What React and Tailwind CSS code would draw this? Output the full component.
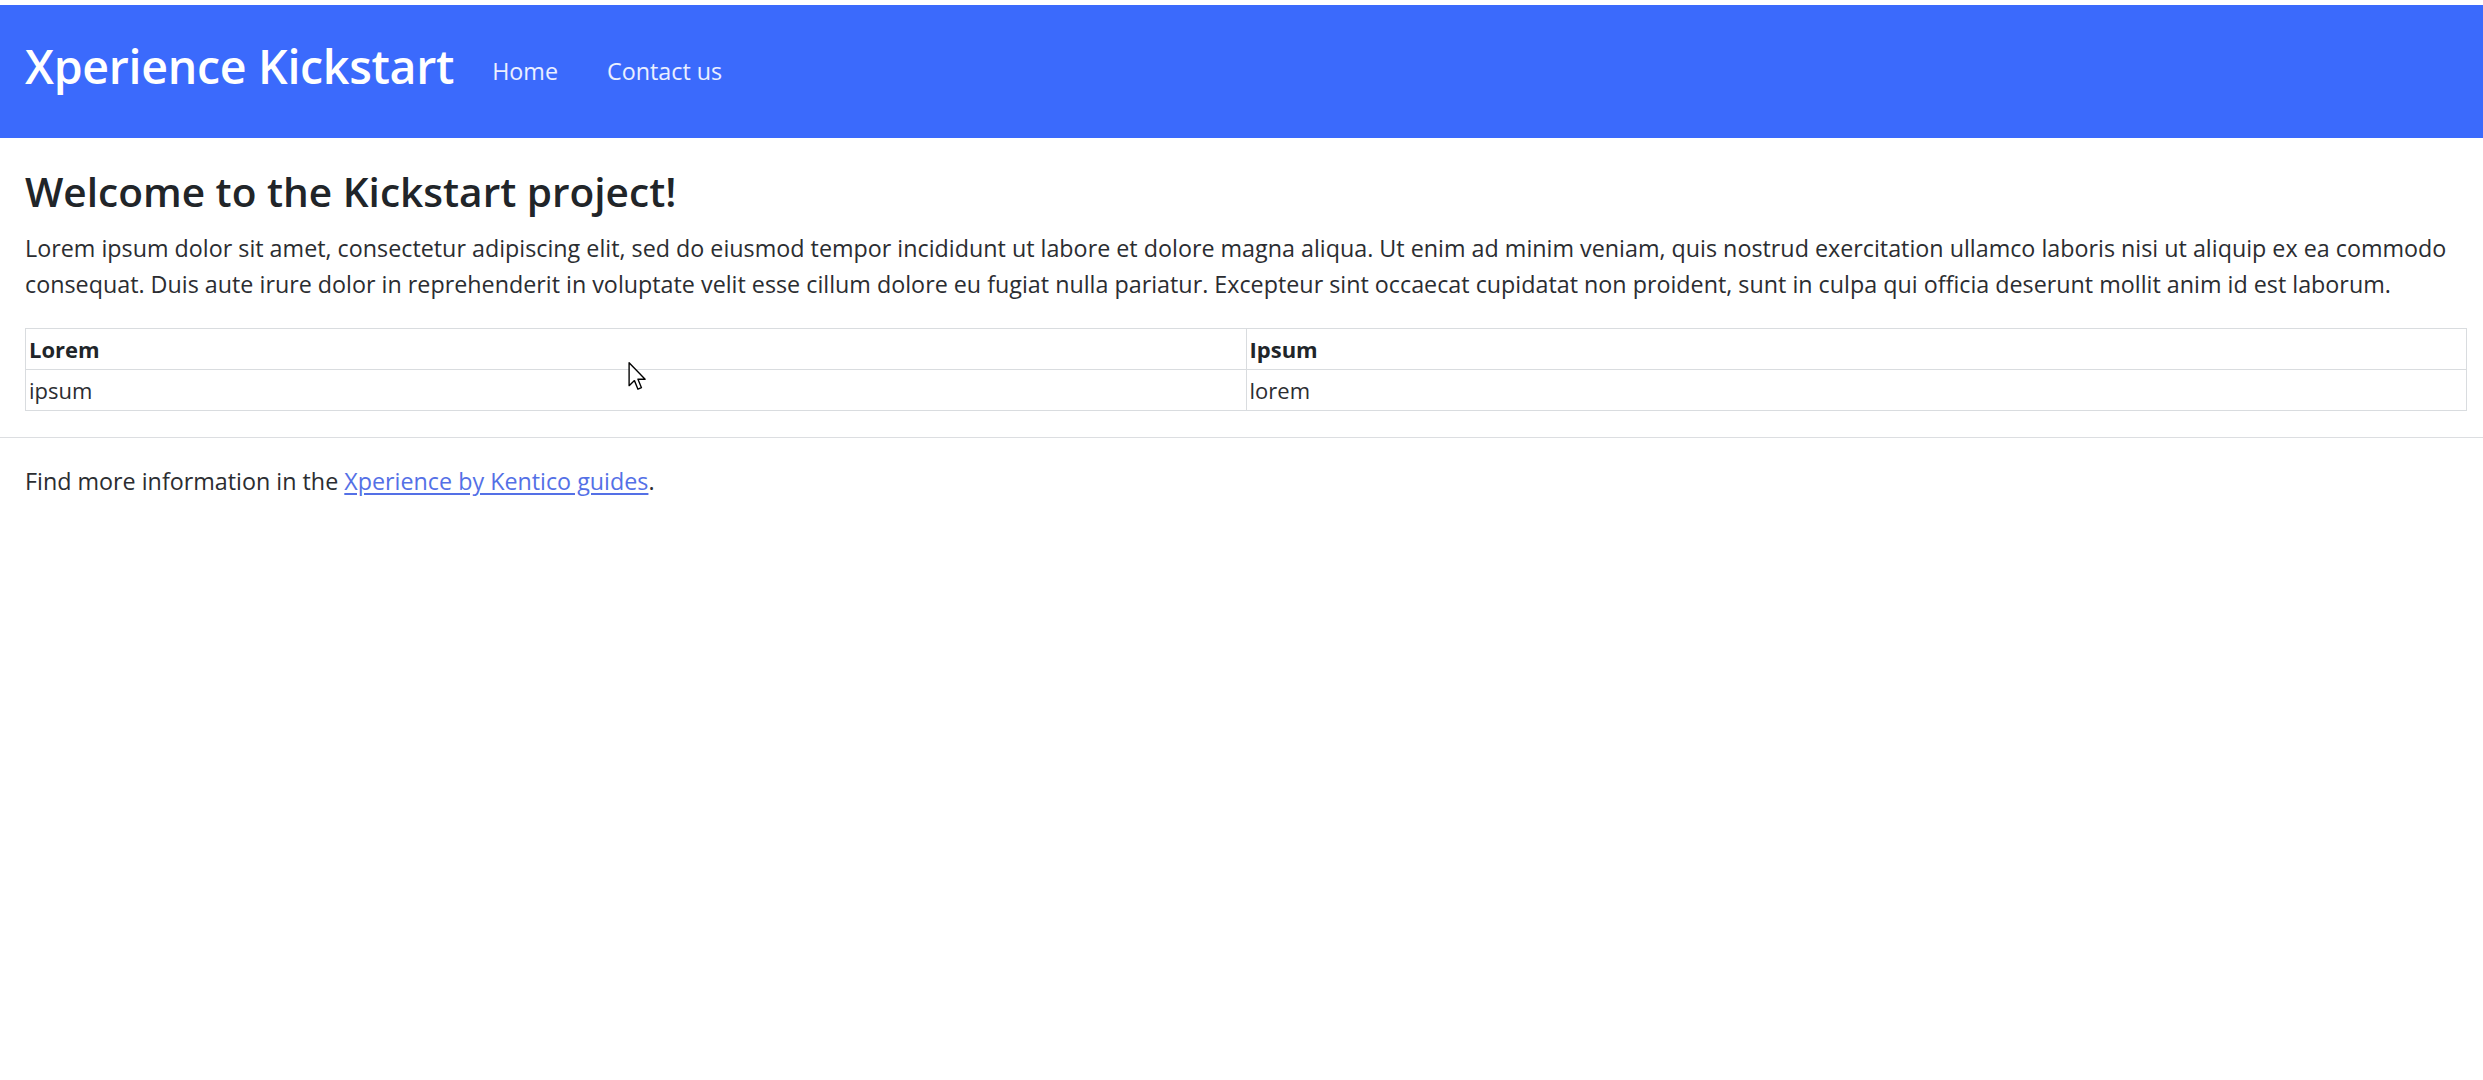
import React from "react";

function Cursor() {
  return (
    <svg
      className="absolute left-[628px] top-[362px] pointer-events-none"
      width="19"
      height="29"
      viewBox="0 0 12 19"
    >
      <path
        d="M0.5 0.5 L0.5 15.5 L4 12.2 L6.3 17.8 L8.6 16.8 L6.3 11.3 L11 11.3 Z"
        fill="#ffffff"
        stroke="#000000"
        strokeWidth="0.9"
        strokeLinejoin="round"
      />
    </svg>
  );
}

export default function App() {
  return (
    <div className="relative min-h-screen bg-white pt-[5px] [font-family:'Open_Sans','Noto_Sans',sans-serif] text-[#212529]">
      <header className="h-[133px] bg-[#3b6afc] flex items-center px-[25px]">
        <a href="#" className="mb-[10px] text-[46.5px] font-semibold text-white leading-none tracking-[-0.3px]">
          Xperience Kickstart
        </a>
        <nav className="flex items-center ml-[38px] gap-[49px] mb-[2px]">
          <a href="#" className="text-[23.3px] text-white/90 leading-[36px]">
            Home
          </a>
          <a href="#" className="text-[23.3px] text-white/90 leading-[36px]">
            Contact us
          </a>
        </nav>
      </header>

      <main className="px-[25px]">
        <h1 className="mt-[30px] mb-[14px] text-[40.6px] font-semibold leading-[48px] text-[#212529]">
          Welcome to the Kickstart project!
        </h1>
        <p className="text-[23.3px] leading-[36px] text-[#2b2d31] mb-[26px]">
          Lorem ipsum dolor sit amet, consectetur adipiscing elit, sed do eiusmod tempor incididunt ut labore et dolore
          magna aliqua. Ut enim ad minim veniam, quis nostrud exercitation ullamco laboris nisi ut aliquip ex ea commodo
          consequat. Duis aute irure dolor in reprehenderit in voluptate velit esse cillum dolore eu fugiat nulla
          pariatur. Excepteur sint occaecat cupidatat non proident, sunt in culpa qui officia deserunt mollit anim id est
          laborum.
        </p>
        <table className="w-[2442px] table-fixed border-collapse border border-[#d9dcdf] text-[22px] leading-[36px] text-[#212529]">
          <thead>
            <tr>
              <th className="w-1/2 border border-[#d9dcdf] px-[3px] py-[2px] text-left font-bold">Lorem</th>
              <th className="w-1/2 border border-[#d9dcdf] px-[3px] py-[2px] text-left font-bold">Ipsum</th>
            </tr>
          </thead>
          <tbody>
            <tr>
              <td className="border border-[#d9dcdf] px-[3px] py-[2px] text-[#2b2d31]">ipsum</td>
              <td className="border border-[#d9dcdf] px-[3px] py-[2px] text-[#2b2d31]">lorem</td>
            </tr>
          </tbody>
        </table>
      </main>

      <hr className="mt-[26px] border-0 border-t border-[#dcdee1]" />

      <footer className="px-[25px] pt-[25px]">
        <p className="text-[23.3px] leading-[36px] text-[#2b2d31]">
          Find more information in the{" "}
          <a href="#" className="text-[#5470e6] underline underline-offset-[3px]">
            Xperience by Kentico guides
          </a>
          .
        </p>
      </footer>

      <Cursor />
    </div>
  );
}
